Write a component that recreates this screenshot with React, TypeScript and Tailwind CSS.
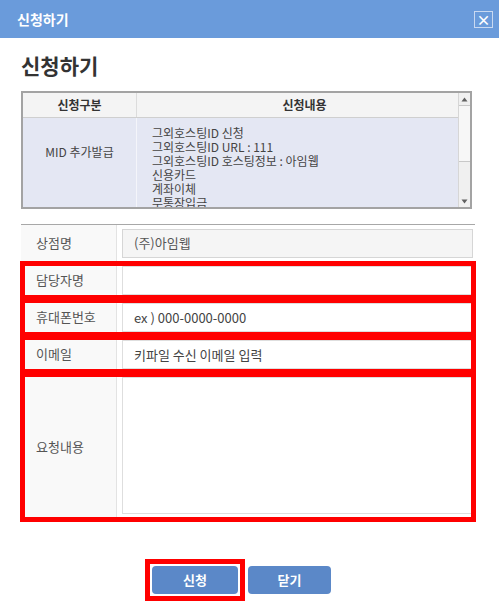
import React from "react";

const FONT = { fontFamily: '"Noto Sans CJK KR", "Noto Sans", sans-serif' };

const detailLines = [
  "그외호스팅ID 신청",
  "그외호스팅ID URL : 111",
  "그외호스팅ID 호스팅정보 : 아임웹",
  "신용카드",
  "계좌이체",
  "무통장입금",
];

function FormRow({
  label,
  marked,
  tall,
  children,
}: {
  label: string;
  marked?: boolean;
  tall?: boolean;
  children: React.ReactNode;
}) {
  return (
    <div
      className={`flex border-b border-[#ececec] ${tall ? "h-[148px]" : "h-[37px]"} ${
        marked ? "outline-[5px] outline-solid outline-[#ff0000] -outline-offset-4 relative z-10" : ""
      }`}
    >
      <div className="w-[96px] shrink-0 bg-[#f9f9f9] border-r border-[#e3e3e3] flex items-center pl-[15px] text-[13px] text-[#555]">
        {label}
      </div>
      <div className={`flex-1 flex pl-[5px] pr-[2px] ${tall ? "items-start pt-[4px]" : "items-center"}`}>{children}</div>
    </div>
  );
}

export default function App() {
  return (
    <div className="w-[499px] h-[605px] bg-white overflow-hidden" style={FONT}>
      <div className="h-[38px] bg-[#6a9bdb] flex items-center justify-between pl-[17px] pr-[6px]">
        <span className="text-[14px] font-bold text-white">신청하기</span>
        <div className="w-[19px] h-[17px] border border-[#c9d9f1] flex items-center justify-center text-white text-[14px] font-bold leading-none">
          ×
        </div>
      </div>

      <div className="px-[21px]">
        <h1 className="mt-[13px] text-[21px] leading-[28px] font-bold text-[#333]">신청하기</h1>

        <div className="mt-[12px] w-[451px] h-[118px] border-2 border-[#a3a3a3] flex">
          <div className="flex-1 flex flex-col">
            <div className="h-[25px] shrink-0 flex bg-[#f4f4f4] border-b border-[#cfcfcf] text-[12px] font-bold text-[#333]">
              <div className="w-[114px] border-r border-[#dcdcdc] flex items-center justify-center">신청구분</div>
              <div className="flex-1 flex items-center justify-center pl-[14px]">신청내용</div>
            </div>
            <div className="flex-1 flex bg-[#e4e7f3] overflow-hidden text-[12px] text-[#444]">
              <div className="w-[114px] border-r border-[#f4f5fa] flex justify-center pt-[26px] leading-[16px]">
                MID 추가발급
              </div>
              <div className="flex-1 pl-[15px] pt-[8px] leading-[14px]">
                {detailLines.map((l) => (
                  <div key={l}>{l}</div>
                ))}
              </div>
            </div>
          </div>
          <div className="w-[12px] shrink-0 bg-[#f0f0f0] border-l border-[#d6d6d6] flex flex-col">
            <div className="h-[12px] flex items-center justify-center">
              <svg width="7" height="5" viewBox="0 0 7 5">
                <path d="M3.5 0.5 L6.5 4.5 L0.5 4.5 Z" fill="#606060" />
              </svg>
            </div>
            <div className="h-[57px] bg-[#f7f7f7] border-y border-[#c8c8c8]" />
            <div className="flex-1" />
            <div className="h-[12px] flex items-center justify-center">
              <svg width="7" height="5" viewBox="0 0 7 5">
                <path d="M3.5 4.5 L6.5 0.5 L0.5 0.5 Z" fill="#606060" />
              </svg>
            </div>
          </div>
        </div>

        <div className="mt-[15px] w-[454px] border-t border-[#a8a8a8]">
          <FormRow label="상점명">
            <div className="w-full h-[29px] border border-[#d6d6d6] bg-[#f5f5f5] flex items-center px-[11px] text-[13px] text-[#555]">
              (주)아임웹
            </div>
          </FormRow>
          <FormRow label="담당자명" marked>
            <input className="w-full h-[29px] border border-[#dedede] bg-white px-[11px] text-[13px] text-[#333] outline-none" />
          </FormRow>
          <FormRow label="휴대폰번호" marked>
            <input
              placeholder="ex ) 000-0000-0000"
              className="w-full h-[29px] border border-[#dedede] bg-white px-[11px] text-[13px] text-[#333] placeholder:text-[#444] outline-none"
            />
          </FormRow>
          <FormRow label="이메일" marked>
            <input
              placeholder="키파일 수신 이메일 입력"
              className="w-full h-[29px] border border-[#dedede] bg-white px-[11px] text-[13px] text-[#333] placeholder:text-[#444] outline-none"
            />
          </FormRow>
          <FormRow label="요청내용" marked tall>
            <textarea className="w-full h-[137px] border border-[#dedede] bg-white resize-none outline-none" />
          </FormRow>
        </div>
      </div>

      <div className="mt-[45px] flex gap-[10px] pl-[152px]">
        <div className="outline-[5px] outline-solid outline-[#ff0000] outline-offset-2">
          <button className="block w-[86px] h-[28px] rounded-[4px] bg-[#5b88c8] text-white text-[13px] font-bold">
            신청
          </button>
        </div>
        <button className="w-[83px] h-[28px] rounded-[4px] bg-[#5b88c8] text-white text-[13px] font-bold">닫기</button>
      </div>
    </div>
  );
}
